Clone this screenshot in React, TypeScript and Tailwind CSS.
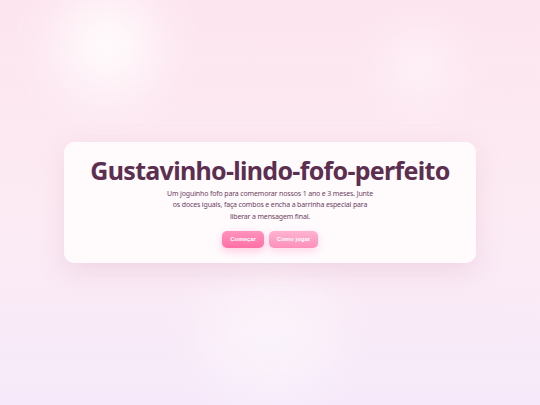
import React from 'react';

const Bubble = ({ className }: { className: string }) => (
  <div className={`absolute rounded-full bg-white blur-xl ${className}`} />
);

const App: React.FC = () => {
  return (
    <div className="relative w-full h-[405px] overflow-hidden bg-gradient-to-b from-[#fde5ef] via-[#fcebf3] to-[#f6eafa] flex items-center justify-center font-['Noto_Sans',sans-serif]">
      {/* soft floating bubbles */}
      <Bubble className="left-[58px] top-[-4px] w-[98px] h-[98px] opacity-80" />
      <Bubble className="left-[392px] top-[38px] w-[55px] h-[55px] opacity-60" />
      <Bubble className="left-[205px] top-[280px] w-[130px] h-[110px] opacity-40" />

      <div className="relative w-[412px] rounded-[10px] bg-[#fffbfd] shadow-[0_8px_24px_rgba(214,150,185,0.25)] px-4 pt-[11px] pb-[15px] flex flex-col items-center">
        <h1 className="whitespace-nowrap text-[25px] leading-[34px] font-bold tracking-[-0.7px] text-[#5c2e4f]">
          Gustavinho-lindo-fofo-perfeito
        </h1>
        <p className="mt-[1px] max-w-[214px] text-center text-[7px] leading-[11.5px] tracking-[-0.15px] text-[#6c3e60]">
          Um joguinho fofo para comemorar nossos 1 ano e 3 meses. Junte os doces iguais, faça combos e encha a barrinha especial para liberar a mensagem final.
        </p>
        <div className="mt-[9px] flex gap-[5px] font-['Liberation_Sans',sans-serif]">
          <button className="h-[17px] w-[42px] rounded-[5px] bg-gradient-to-b from-[#ff92bd] to-[#ff6fa7] text-white text-[6px] font-bold shadow-[0_3px_8px_rgba(255,110,165,0.35)]">
            Começar
          </button>
          <button className="h-[17px] w-[49px] rounded-[5px] bg-gradient-to-b from-[#ffb3d1] to-[#fc8fbb] text-white text-[6px] font-bold shadow-[0_3px_8px_rgba(255,130,180,0.3)]">
            Como jogar
          </button>
        </div>
      </div>
    </div>
  );
};

export default App;
